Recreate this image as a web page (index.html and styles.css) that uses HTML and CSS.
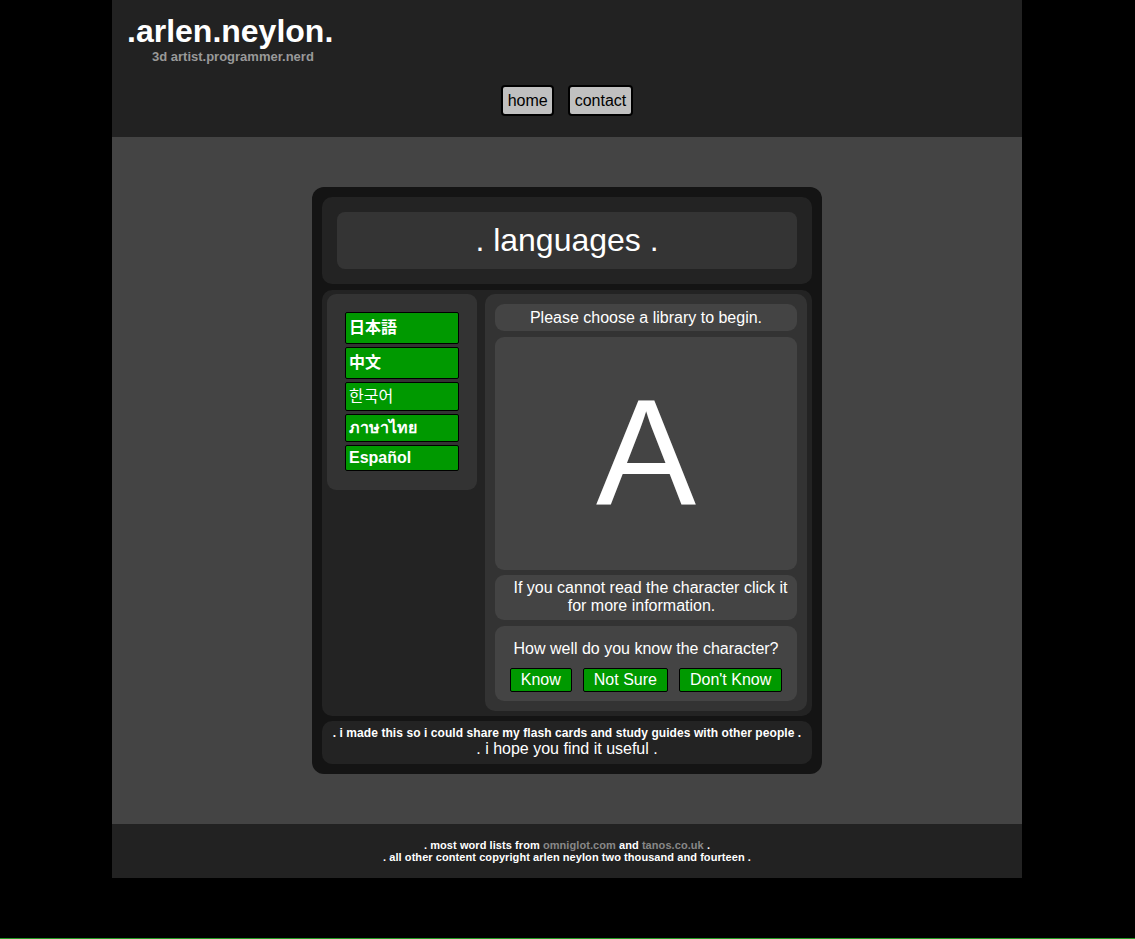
FILE: index.html
```html
<!DOCTYPE html>
<html lang="en">
<head>
<meta charset="utf-8">
<title>.arlen.neylon. languages</title>
<link rel="stylesheet" href="styles.css">
</head>
<body>
<div class="page">
  <header class="site-header">
    <h1 class="brand-title">.arlen.neylon.</h1>
    <div class="brand-sub">3d artist.programmer.nerd</div>
    <nav class="nav">
      <a class="nav-btn" href="#">home</a>
      <a class="nav-btn" href="#">contact</a>
    </nav>
  </header>

  <main class="main">
    <section class="card">
      <div class="title-wrap">
        <h2 class="title">. languages .</h2>
      </div>

      <div class="content">
        <div class="langs">
          <a class="lang lang-ja" href="#">日本語</a>
          <a class="lang lang-zh" href="#">中文</a>
          <a class="lang lang-ko" href="#">한국어</a>
          <a class="lang lang-th" href="#">ภาษาไทย</a>
          <a class="lang" href="#">Español</a>
        </div>

        <div class="study">
          <div class="msg">Please choose a library to begin.</div>
          <div class="glyph">A</div>
          <div class="info">If you cannot read the character click it<br>for more information.</div>
          <div class="rate">
            <div class="rate-q">How well do you know the character?</div>
            <div class="rate-btns">
              <button class="rate-btn" type="button">Know</button>
              <button class="rate-btn" type="button">Not Sure</button>
              <button class="rate-btn" type="button">Don't Know</button>
            </div>
          </div>
        </div>
      </div>

      <div class="note">
        <div class="note-small">. i made this so i could share my flash cards and study guides with other people .</div>
        <div class="note-big">. i hope you find it useful .</div>
      </div>
    </section>
  </main>

  <footer class="site-footer">
    <div>. most word lists from <a href="#">omniglot.com</a> and <a href="#">tanos.co.uk</a> .</div>
    <div>. all other content copyright arlen neylon two thousand and fourteen .</div>
  </footer>
</div>
<div class="bottom-line"></div>
</body>
</html>
```

FILE: styles.css
```css
html, body {
  margin: 0;
  padding: 0;
}

body {
  background: #000;
  color: #fff;
  font-family: "Liberation Sans", Arial, sans-serif;
  padding-right: 1px;
}

.page {
  width: 910px;
  margin: 0 auto;
}

/* header */
.site-header {
  background: #222;
  height: 137px;
  box-sizing: border-box;
  padding-top: 13px;
}

.brand-title {
  margin: 0;
  padding-left: 15px;
  font-size: 32px;
  line-height: 36px;
  font-weight: bold;
  color: #fff;
}

.brand-sub {
  padding-left: 40px;
  font-size: 13px;
  line-height: 15px;
  font-weight: bold;
  color: #999;
}

.nav {
  display: flex;
  justify-content: center;
  gap: 14px;
  margin-top: 21px;
}

.nav-btn {
  display: block;
  background: #c0c0c0;
  border: 2px solid #000;
  border-radius: 4px;
  color: #000;
  font-size: 16px;
  line-height: 27px;
  padding: 0 4.5px;
  text-decoration: none;
}

/* main */
.main {
  background: #444;
  padding: 50px 0;
}

.card {
  width: 510px;
  margin: 0 auto;
  box-sizing: border-box;
  background: #141414;
  border-radius: 12px;
  padding: 10px;
}

.title-wrap {
  background: #232323;
  border-radius: 10px;
  padding: 15px;
}

.title {
  margin: 0;
  background: #343434;
  border-radius: 8px;
  height: 57px;
  line-height: 57px;
  text-align: center;
  font-size: 32px;
  font-weight: normal;
}

.content {
  margin-top: 6px;
  background: #232323;
  border-radius: 10px;
  padding: 4px 5px 5px;
  display: flex;
  gap: 8px;
  align-items: flex-start;
}

.langs {
  width: 150px;
  box-sizing: border-box;
  padding: 18px 18px 19px;
  background: #333;
  border-radius: 9px;
  display: flex;
  flex-direction: column;
  gap: 3px;
}

.lang {
  display: block;
  background: #009900;
  border: 1px solid #000;
  border-radius: 2px;
  padding: 0 3px;
  color: #fff;
  font-family: "Liberation Sans", Arial, "Noto Sans CJK JP", sans-serif;
  font-weight: bold;
  font-size: 16px;
  line-height: 24px;
  text-decoration: none;
}

.lang-ja {
  line-height: 30px;
}

.lang-zh {
  line-height: 30px;
  font-family: "Liberation Sans", Arial, "Noto Sans CJK SC", sans-serif;
}

.lang-ko {
  line-height: 27px;
  font-weight: normal;
  font-family: "Liberation Sans", Arial, "Noto Sans CJK KR", sans-serif;
}

.lang-th {
  line-height: 26px;
}

.study {
  width: 322px;
  box-sizing: border-box;
  padding: 10px;
  background: #333;
  border-radius: 10px;
}

.msg {
  background: #444;
  border-radius: 9px;
  line-height: 27px;
  text-align: center;
  font-size: 16px;
}

.glyph {
  margin-top: 6px;
  background: #444;
  border-radius: 9px;
  height: 233px;
  line-height: 230px;
  text-align: center;
  font-size: 150px;
  cursor: pointer;
}

.info {
  margin-top: 5px;
  background: #444;
  border-radius: 9px;
  padding: 4px 9px 5px 0;
  line-height: 18px;
  font-size: 16px;
  text-align: center;
  text-indent: 18px;
}

.rate {
  margin-top: 6px;
  background: #444;
  border-radius: 9px;
  padding: 14px 0 9px;
  text-align: center;
}

.rate-q {
  font-size: 16px;
  line-height: 18px;
}

.rate-btns {
  display: flex;
  justify-content: center;
  gap: 11px;
  margin-top: 10px;
}

.rate-btn {
  margin: 0;
  background: #009900;
  border: 1px solid #000;
  border-radius: 2px;
  color: #fff;
  font-family: "Liberation Sans", Arial, sans-serif;
  font-size: 16px;
  line-height: 22px;
  padding: 0 10px;
  cursor: pointer;
}

.note {
  margin-top: 5px;
  background: #232323;
  border-radius: 10px;
  padding: 5px 0 6px;
  text-align: center;
}

.note-small {
  font-size: 12px;
  font-weight: bold;
  line-height: 14px;
  letter-spacing: 0.07px;
}

.note-big {
  font-size: 16px;
  line-height: 18px;
}

/* footer */
.site-footer {
  background: #222;
  padding: 15px 0;
  text-align: center;
  font-size: 11px;
  font-weight: bold;
  line-height: 12px;
  letter-spacing: 0.07px;
}

.site-footer a {
  color: #888;
  text-decoration: none;
}

.bottom-line {
  position: fixed;
  left: 0;
  right: 0;
  bottom: 0;
  height: 1px;
  background: #229922;
}
```
